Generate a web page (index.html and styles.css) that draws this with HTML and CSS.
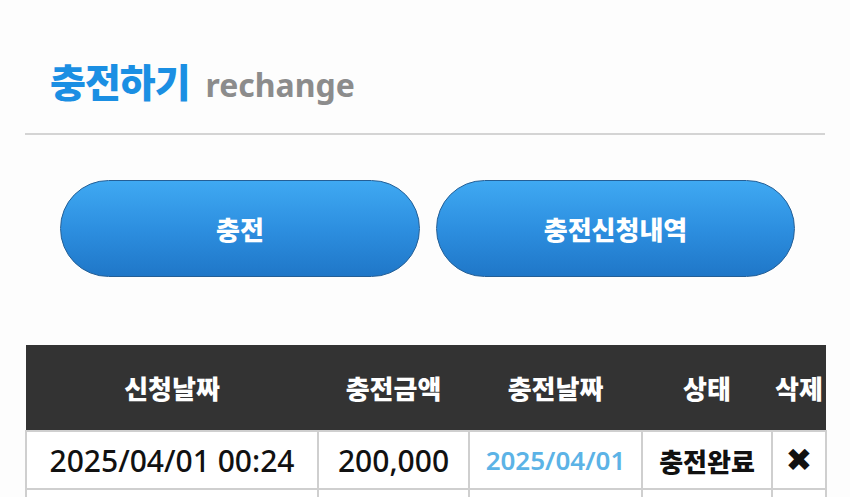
FILE: index.html
```html
<!DOCTYPE html>
<html lang="ko">
<head>
    <meta charset="UTF-8">
    <meta name="viewport" content="width=device-width, initial-scale=1.0">
    <title>충전하기</title>
    <link rel="stylesheet" href="styles.css">
</head>
<body>
    <div class="page">
        <div class="page-title">
            <h1>충전하기</h1>
            <span class="sub">rechange</span>
        </div>

        <div class="tab-buttons">
            <button class="pill-button">충전</button>
            <button class="pill-button">충전신청내역</button>
        </div>

        <div class="history">
            <table class="history-table">
                <colgroup>
                    <col class="c-req">
                    <col class="c-amount">
                    <col class="c-date">
                    <col class="c-state">
                    <col class="c-del">
                </colgroup>
                <thead>
                    <tr>
                        <th>신청날짜</th>
                        <th>충전금액</th>
                        <th>충전날짜</th>
                        <th>상태</th>
                        <th>삭제</th>
                    </tr>
                </thead>
                <tbody>
                    <tr>
                        <td>2025/04/01 00:24</td>
                        <td>200,000</td>
                        <td class="done-date">2025/04/01</td>
                        <td class="state">충전완료</td>
                        <td class="del">&#10006;</td>
                    </tr>
                    <tr>
                        <td>2025/03/28 21:10</td>
                        <td>100,000</td>
                        <td class="done-date">2025/03/28</td>
                        <td class="state">충전완료</td>
                        <td class="del">&#10006;</td>
                    </tr>
                </tbody>
            </table>
        </div>
    </div>
</body>
</html>
```

FILE: styles.css
```css
body {
    margin: 0;
    background: #fdfdfd;
    font-family: "Noto Sans CJK KR", "Noto Sans", sans-serif;
    color: #111;
    overflow: hidden;
}
.page {
    padding: 0 25px;
}
.page-title {
    display: flex;
    align-items: baseline;
    gap: 16px;
    padding: 57px 0 27px 25px;
    border-bottom: 2px solid #d4d4d4;
}
.page-title h1 {
    margin: 0;
    font-size: 39px;
    font-weight: 900;
    line-height: 46px;
    color: #1b8fe3;
    letter-spacing: -1px;
}
.page-title .sub {
    font-family: "Noto Sans", sans-serif;
    font-size: 32px;
    font-weight: 700;
    color: #8c8c8c;
}
.tab-buttons {
    display: flex;
    gap: 16px;
    padding: 45px 0 0 35px;
}
.pill-button {
    width: 360px;
    height: 97px;
    border: 1px solid #245f96;
    border-radius: 49px;
    background: linear-gradient(to bottom, #3fa9f2 0%, #2d8fe0 50%, #1f77c8 100%);
    color: #fff;
    font-family: inherit;
    font-size: 26px;
    font-weight: 900;
    cursor: pointer;
}
.pill-button:nth-child(2) {
    width: 359px;
}
.history {
    padding-top: 68px;
}
.history-table {
    width: 800px;
    border-collapse: collapse;
    table-layout: fixed;
}
.c-req { width: 292px; }
.c-amount { width: 151px; }
.c-date { width: 173px; }
.c-state { width: 130px; }
.c-del { width: 54px; }
.history-table th {
    height: 85px;
    padding: 0;
    background: #333;
    color: #fff;
    font-size: 26px;
    font-weight: 900;
    white-space: nowrap;
}
.history-table td {
    height: 56px;
    padding: 0;
    border: 2px solid #cfcfcf;
    background: #fff;
    text-align: center;
    font-family: "Noto Sans", sans-serif;
    font-size: 30px;
    font-weight: 500;
    white-space: nowrap;
}
.history-table td.done-date {
    color: #5cb3e6;
    font-size: 26px;
    font-weight: 600;
}
.history-table td.state {
    font-family: "Noto Sans CJK KR", sans-serif;
    font-size: 26px;
    font-weight: 900;
}
.history-table td.del {
    font-family: "DejaVu Sans", sans-serif;
    font-size: 32px;
}
```
